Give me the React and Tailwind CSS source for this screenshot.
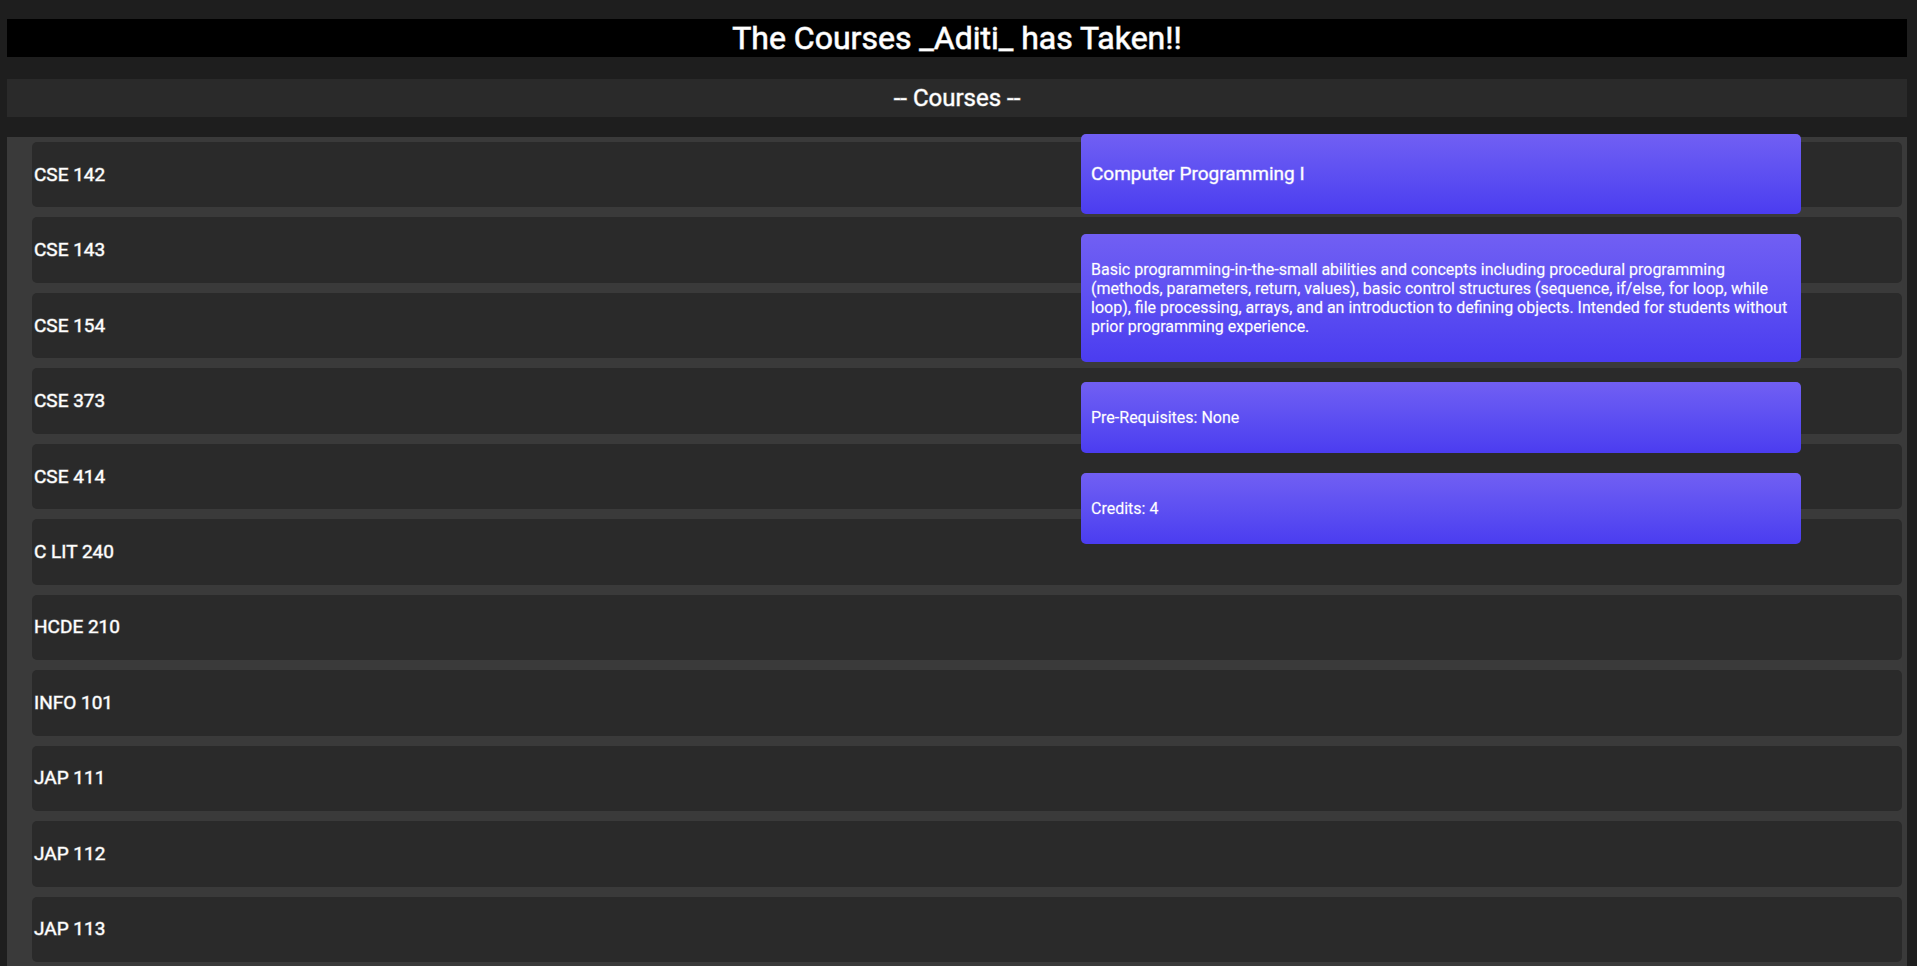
const courses = [
  "CSE 142",
  "CSE 143",
  "CSE 154",
  "CSE 373",
  "CSE 414",
  "C LIT 240",
  "HCDE 210",
  "INFO 101",
  "JAP 111",
  "JAP 112",
  "JAP 113",
];

function DetailCard({ children }) {
  return (
    <section className="rounded-[5px] bg-linear-to-b from-[#715ff3] to-[#4b3cf0] px-[10px] py-[26px]">
      {children}
    </section>
  );
}

function CourseDetails() {
  return (
    <aside className="absolute top-[-3px] right-[106px] flex w-[720px] flex-col gap-5 leading-[19px] [-webkit-text-stroke:1px_#ffffff33]">
      <DetailCard>
        <h3 className="text-[19px] leading-7 [-webkit-text-stroke:1px_#ffffff66]">
          Computer Programming I
        </h3>
      </DetailCard>
      <DetailCard>
        <p>
          Basic programming-in-the-small abilities and concepts including procedural programming
          (methods, parameters, return, values), basic control structures (sequence, if/else, for
          loop, while loop), file processing, arrays, and an introduction to defining objects.
          Intended for students without prior programming experience.
        </p>
      </DetailCard>
      <DetailCard>
        <p>Pre-Requisites: None</p>
      </DetailCard>
      <DetailCard>
        <p>Credits: 4</p>
      </DetailCard>
    </aside>
  );
}

export default function App() {
  return (
    <main className="flex min-h-screen flex-col bg-[#1e1e1e] pt-[19px] pr-[10px] pl-[7px] font-['Roboto',sans-serif] text-white">
      <h1 className="bg-black text-center text-[32px] leading-[38px] [-webkit-text-stroke:1px_#ffffffb3]">
        The Courses _Aditi_ has Taken!!
      </h1>
      <h2 className="mt-[22px] bg-[#2a2a2a] text-center text-2xl leading-[38px] [-webkit-text-stroke:1px_#ffffff80]">
        -- Courses --
      </h2>
      <div className="relative mt-5 flex grow flex-col bg-[#3a3a3a]">
        <ul className="flex grow flex-col gap-[10px] pt-[5px] pr-[5px] pb-1 pl-[25px]">
          {courses.map((course) => (
            <li key={course} className="flex flex-1 items-center rounded-[5px] bg-[#2a2a2a]">
              <h3 className="px-[2px] text-[19px] leading-6 [-webkit-text-stroke:1px_#ffffff80]">
                {course}
              </h3>
            </li>
          ))}
        </ul>
        <CourseDetails />
      </div>
    </main>
  );
}
